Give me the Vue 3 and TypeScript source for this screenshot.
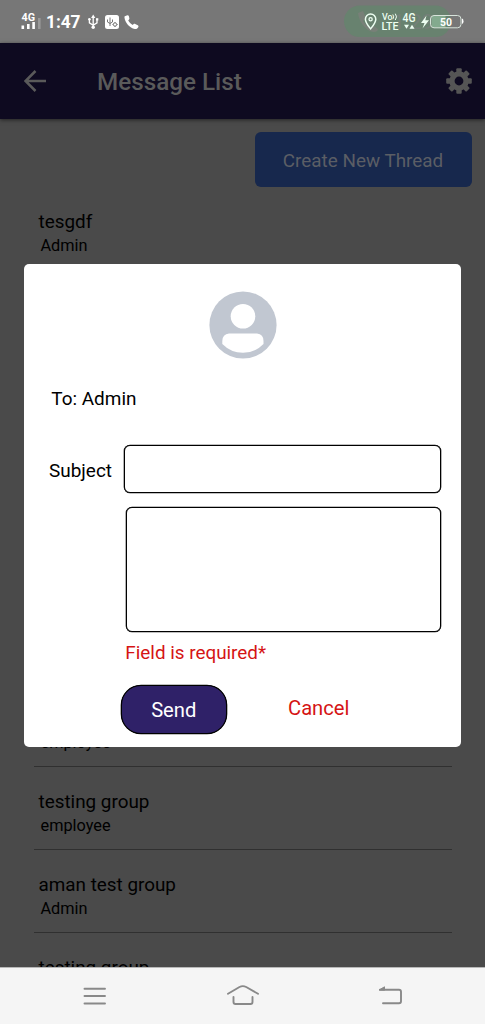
<script setup lang="ts">
interface Thread {
  title: string
  from: string
}

const firstThread: Thread = { title: 'tesgdf', from: 'Admin' }

const threads: Thread[] = [
  { title: 'testing group', from: 'employee' },
  { title: 'testing group', from: 'employee' },
  { title: 'aman test group', from: 'Admin' },
  { title: 'testing group', from: 'employee' },
]
</script>

<template>
  <div class="screen">
    <div class="status">
      <svg class="status-left" width="160" height="43" viewBox="0 0 160 43">
        <g fill="#fff" class="bold">
          <text x="21.5" y="21" font-size="11" textLength="13.5" lengthAdjust="spacingAndGlyphs">4G</text>
          <rect x="21.5" y="25.5" width="2.6" height="3.5" />
          <rect x="27" y="24" width="2.6" height="5" />
          <rect x="32.3" y="22" width="2.6" height="7" />
          <rect x="38" y="18" width="2.6" height="11" opacity=".25" />
          <text x="46" y="28.300" font-size="18" textLength="34.5" lengthAdjust="spacingAndGlyphs">1:47</text>
        </g>
        <g fill="none" stroke="#fff" stroke-width="1.3">
          <path d="M93.2 17V27.500M89.400 19.500V22.800L93.200 25.200L97 22.800V19.500" />
        </g>
        <path d="M93.200 14.500L95.300 18H91.100Z" fill="#fff" />
        <circle cx="93.200" cy="27.300" r="1.700" fill="#fff" />
        <circle cx="89.400" cy="19.300" r="1.300" fill="#fff" />
        <rect x="96" y="18.200" width="2.300" height="2.300" fill="#fff" />
        <rect x="105" y="15" width="14" height="14" rx="2.500" fill="#fff" />
        <g fill="none" stroke="#777" stroke-width="1">
          <path d="M110 17.500V26M107.500 19.500V22L110 23.500L112.500 22V19.500" />
          <circle cx="115" cy="24.500" r="1.700" />
          <path d="M112.500 24.500H113.300M116.700 24.500H117.600M115 22V22.800M115 26.200V27" />
        </g>
        <path d="M124.800 16.200L127.400 15.300C128.200 15.200 128.700 15.700 128.900 16.300L129.400 18.400C129.500 19.200 128.500 20 128.200 20.300C129.200 22.400 130.800 24 132.700 24.900C133.200 24.300 133.900 23.600 134.700 23.700L137.800 25.300C138.700 25.800 138.600 26.500 138.200 27.200C137.500 28.700 136.200 29.200 134.800 28.900C129.700 27.900 125.200 22.800 124.500 17.700C124.400 17 124.400 16.500 124.800 16.200Z" fill="#fff" />
      </svg>
      <svg class="status-right" width="150" height="43" viewBox="0 0 150 43">
        <rect x="9" y="5.500" width="107" height="31.500" rx="15.700" fill="#68826f" />
        <path d="M23 13L28 11L31 18L28 21C30 24 33 26 36 28L39 26L43 29C43 32 39 33 35 31C29 28 24 21 23 13Z" fill="#788078" />
        <text x="58" y="29" font-size="21" fill="#748078">1:29</text>
        <path d="M35.600 28.800C33 25.500 30.400 22.600 30.400 19.200A5.200 5.200 0 0 1 40.800 19.200C40.800 22.600 38.200 25.500 35.600 28.800Z" fill="none" stroke="#edfff2" stroke-width="1.500" />
        <circle cx="35.600" cy="19.200" r="1.600" fill="none" stroke="#edfff2" stroke-width="1.300" />
        <g fill="#edfff2" class="medium">
          <text x="47" y="19.500" font-size="9" textLength="10.500" lengthAdjust="spacingAndGlyphs">Vo</text>
          <text x="46.500" y="29.700" font-size="11" textLength="17" lengthAdjust="spacingAndGlyphs">LTE</text>
          <text x="67.500" y="22.200" font-size="12" textLength="13" lengthAdjust="spacingAndGlyphs">4G</text>
          <path d="M69 24.800H74L71.500 28.800ZM74.500 28.800H79.500L77 24.800Z" />
          <path d="M91.500 15.500L86 23H89.500L87.500 28.500L94 20.300H90.300Z" />
        </g>
        <path d="M57.800 14.500Q59.600 16.800 57.800 19.200M60.300 13.700Q62.700 16.800 60.300 20" fill="none" stroke="#edfff2" stroke-width="1" />
        <path d="M99 15.500H110.500V27.500H99Q96.500 27.500 96.500 25V18Q96.500 15.500 99 15.500Z" fill="#83aa8e" />
        <rect x="95.500" y="15.500" width="30.500" height="12.300" rx="3.500" fill="none" stroke="#d8e4db" stroke-width="1" />
        <path d="M127 18.500Q128.500 18.500 128.500 21.300T127 24Z" fill="#fff" />
        <text x="105" y="25.500" font-size="11" class="bold" fill="#fff" textLength="12" lengthAdjust="spacingAndGlyphs">50</text>
      </svg>
    </div>

    <header class="header">
      <svg class="back" width="24" height="24" viewBox="0 0 24 24">
        <path d="M22 12H2M11.500 2L1.500 12L11.500 22" fill="none" stroke="#5a5a5a" stroke-width="2.500" />
      </svg>
      <h1>Message List</h1>
      <svg class="gear" width="26" height="26" viewBox="0 0 26 26">
        <g fill="#555">
          <rect x="10.300" y="0.200" width="5.400" height="25.600" rx="1" />
          <rect x="10.300" y="0.200" width="5.400" height="25.600" rx="1" transform="rotate(45 13 13)" />
          <rect x="10.300" y="0.200" width="5.400" height="25.600" rx="1" transform="rotate(90 13 13)" />
          <rect x="10.300" y="0.200" width="5.400" height="25.600" rx="1" transform="rotate(135 13 13)" />
          <circle cx="13" cy="13" r="9.700" />
        </g>
        <circle cx="13" cy="13" r="4.400" fill="#0e0a20" />
      </svg>
    </header>

    <main class="content">
      <button class="create">Create New Thread</button>
      <div class="row first">
        <div class="title">{{ firstThread.title }}</div>
        <div class="from">{{ firstThread.from }}</div>
      </div>
      <div v-for="(thread, i) in threads" :key="i" class="row">
        <div class="title">{{ thread.title }}</div>
        <div class="from">{{ thread.from }}</div>
      </div>
    </main>

    <nav class="navbar">
      <svg width="485" height="57" viewBox="0 0 485 57" fill="none" stroke="#898989" stroke-width="1.900" stroke-linecap="round" stroke-linejoin="round">
        <path d="M84.500 21.700H105M84.500 29H105M84.500 36.500H105" />
        <path d="M228 26.800L239.500 20Q242.800 18.200 246.200 20L258 26.800M233.500 30V35Q233.500 37 235.500 37H250.500Q252.500 37 252.500 35V30" />
        <path d="M380 22.800H399Q401 22.800 401 24.800V34.200Q401 36.200 399 36.200H383" />
        <path d="M379.500 22.800L384.500 19.800V22.800Z" fill="#898989" stroke-width="1" />
      </svg>
    </nav>

    <section class="dialog">
      <svg class="avatar" width="68" height="68" viewBox="0 0 68 68">
        <circle cx="34" cy="34" r="33.600" fill="#c1c7d1" />
        <circle cx="34" cy="25.300" r="12.300" fill="#fff" />
        <path d="M20 42.500H48Q54.500 43 54.500 50V53Q46 61.800 34 61.800T13.300 53V50Q13.500 43 20 42.500Z" fill="#fff" />
      </svg>
      <div class="to">To: Admin</div>
      <div class="subject">
        <label for="subject">Subject</label>
        <input id="subject" type="text" />
      </div>
      <textarea class="message"></textarea>
      <div class="error">Field is required*</div>
      <div class="actions">
        <button class="send">Send</button>
        <button class="cancel">Cancel</button>
      </div>
    </section>
  </div>
</template>

<style>
body {
  background: #4a4a4a;
  overflow: hidden;
}
</style>

<style scoped>
.screen {
  position: relative;
  display: flex;
  flex-direction: column;
  width: 485px;
  height: 1024px;
  overflow: hidden;
  background: #4a4a4a;
  color: #000;
  font-family: Roboto, "Noto Sans", sans-serif;
  font-size: 18.95px;
}
.screen * {
  box-sizing: border-box;
}
svg {
  display: block;
  flex: none;
}
.bold {
  font-weight: 700;
}
.medium {
  font-weight: 500;
}
.status {
  display: flex;
  justify-content: space-between;
  flex: none;
  height: 43px;
  background: #777;
}
.header {
  z-index: 1;
  display: flex;
  align-items: center;
  flex: none;
  height: 76px;
  padding: 0 13.5px 0 24px;
  background: #0e0a20;
  box-shadow: 0 1px 4px rgba(0, 0, 0, 0.55);
}
h1 {
  flex: 1;
  margin: 2px 0 0 49px;
  color: #5a5a5a;
  font-size: 24.25px;
  font-weight: 500;
  line-height: 30px;
}
button {
  padding: 0;
  border: 0;
  background: none;
  font-family: inherit;
}
.content {
  flex: 1;
  min-height: 0;
  overflow: hidden;
  padding: 13px 13.5px 0 33.5px;
}
.create {
  display: block;
  width: 217px;
  height: 55px;
  margin-left: auto;
  padding-top: 2px;
  border-radius: 6px;
  background: #17284d;
  color: #5b5e65;
  font-size: 18.86px;
}
.row {
  width: 418px;
  height: 83px;
  padding: 22px 0 0 5px;
  border-bottom: 1px solid #303030;
}
.row.first {
  margin: 0 0 414px;
  border-bottom-color: transparent;
}
.title {
  height: 26px;
  font-size: 18.86px;
  line-height: 26px;
}
.from {
  padding-left: 2px;
  font-size: 16.3px;
  line-height: 22px;
}
.navbar {
  flex: none;
  height: 57px;
  background: #f5f5f5;
  box-shadow: inset 0 1px #b8b8b8;
}
.dialog {
  position: absolute;
  z-index: 2;
  top: 264px;
  left: 24px;
  width: 437px;
  height: 483px;
  padding: 26.5px 20.5px 0 25px;
  border-radius: 5px;
  background: #fff;
}
.avatar {
  margin-left: 159.6px;
}
.to {
  margin: 28.5px 0 0 2.3px;
  line-height: 24px;
}
.subject {
  display: flex;
  align-items: center;
  justify-content: space-between;
  margin-top: 34px;
}
label {
  padding-top: 2px;
}
input,
textarea {
  display: block;
  margin: 0;
  border: 1.35px solid #000;
  border-radius: 6px;
  outline: 0;
  background: #fff;
  box-shadow: 0 0 0 0.3px #000;
  font: inherit;
}
input {
  width: 316.5px;
  height: 48px;
}
.message {
  width: 315px;
  height: 125px;
  margin: 14px 0 0 76.5px;
  resize: none;
}
.error {
  margin: 9px 0 0 76.3px;
  color: #d51414;
  font-size: 18.86px;
  line-height: 24px;
}
.actions {
  display: flex;
  align-items: center;
  margin: 20px 0 0 71.5px;
}
.send {
  width: 106.5px;
  height: 49px;
  padding-top: 1px;
  border: 1.35px solid #000;
  border-radius: 20px;
  background: #2f2168;
  box-shadow: 0 0 0 0.3px #000;
  color: #fff;
  font-size: 20.2px;
}
.cancel {
  margin: -3px 0 0 61px;
  color: #d51414;
  font-size: 20.2px;
}
</style>
